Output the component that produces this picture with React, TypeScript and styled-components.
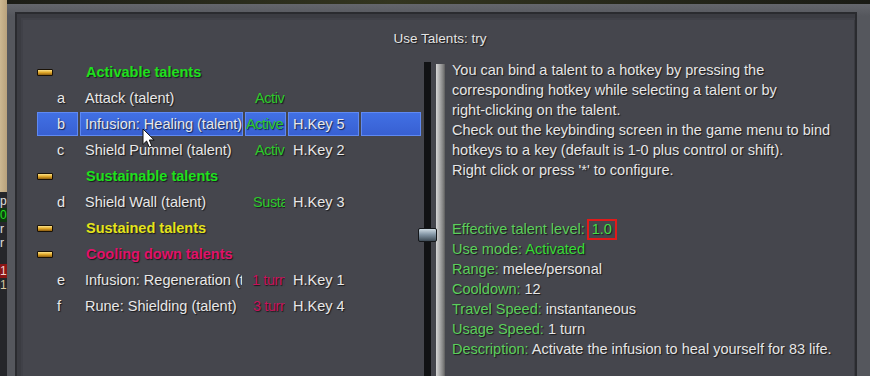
import React from 'react'
import styled, { createGlobalStyle } from 'styled-components'

const GlobalStyle = createGlobalStyle`
  html, body {
    margin: 0;
    padding: 0;
    background: #1e1f19;
  }
  body {
    font-family: "Liberation Sans", Arial, sans-serif;
  }
`

const Screen = styled.div`
  position: relative;
  display: flex;
  width: 870px;
  height: 376px;
  overflow: hidden;
  background: linear-gradient(90deg, #1c1d17, #33351f 45%, #1a1b15);
`

// bit of the game map / log showing at the left edge
const GameEdge = styled.div`
  width: 7px;
  flex: none;
  display: flex;
  flex-direction: column;
  overflow: hidden;
  font-size: 12px;
  line-height: 14px;
`

const Parchment = styled.div`
  height: 192px;
  flex: none;
  background: linear-gradient(90deg, #cdb891, #b9a27c);
`

const LogArea = styled.div`
  flex: 1;
  background: #25262a;
  padding-top: 2px;
`

const LogChar = styled.div<{ $color: string; $bg?: string }>`
  height: 14px;
  color: ${({ $color }) => $color};
  background: ${({ $bg }) => $bg ?? 'transparent'};
`

const Frame = styled.div`
  flex: 1;
  display: flex;
  margin-top: 4px;
  padding: 8px 13px 0 8px;
  background: linear-gradient(180deg, #64666c, #55575d 12px);
`

const Panel = styled.div`
  flex: 1;
  display: flex;
  flex-direction: column;
  border: 2px solid #2a2b2f;
  border-bottom: none;
  background: #45464d;
  box-shadow: inset 4px 4px 0 #3b3c42, inset 6px 6px 0 #404148, inset -1px 0 0 #3a3b41;
  text-shadow: 1px 1px 1px rgba(0, 0, 0, 0.65);
`

const Title = styled.div`
  padding: 15px 0 10px 8px;
  line-height: 20px;
  height: 20px;
  text-align: center;
  font-size: 13.5px;
  color: #e4e4e4;
`

const Body = styled.div`
  flex: 1;
  display: flex;
  padding-left: 20px;
`

const List = styled.div`
  width: 384px;
  flex: none;
  display: flex;
  flex-direction: column;
`

const HeaderRow = styled.div`
  height: 26px;
  display: flex;
  align-items: center;
`

const GoldBar = styled.span`
  width: 14px;
  height: 5px;
  margin-right: 33px;
  border: 1px solid #1a1206;
  border-radius: 1px;
  background: linear-gradient(180deg, #fde38a, #e0a82a 50%, #8d5d10);
`

const HeaderText = styled.span<{ $color: string }>`
  font-size: 14.5px;
  font-weight: bold;
  color: ${({ $color }) => $color};
`

const ItemRow = styled.div`
  height: 26px;
  display: grid;
  grid-template-columns: 41px 163px 41px 71px 60px;
  column-gap: 2px;
  align-items: center;
`

const Cell = styled.div<{ $pad: number; $selected?: boolean; $color?: string; $tight?: boolean }>`
  height: 22px;
  display: flex;
  align-items: center;
  overflow: hidden;
  white-space: nowrap;
  padding-left: ${({ $pad }) => $pad}px;
  font-size: 14.5px;
  letter-spacing: ${({ $tight }) => ($tight ? '-0.4px' : 'normal')};
  color: ${({ $color }) => $color ?? '#e8e8e8'};
  border: 1px solid ${({ $selected }) => ($selected ? '#5f89f2' : 'transparent')};
  background: ${({ $selected }) => ($selected ? 'linear-gradient(180deg, #4170e4, #3860d2)' : 'transparent')};
`

const ScrollRail = styled.div`
  position: relative;
  width: 7px;
  flex: none;
  margin: 3px 0 0 3px;
  background: #111214;
`

const Thumb = styled.div`
  position: absolute;
  left: -6px;
  top: 166px;
  width: 17px;
  height: 12px;
  border: 1px solid #15171a;
  border-radius: 2px;
  background: linear-gradient(180deg, #cfdbe4, #8597a6 45%, #3e4a55);
`

const Separator = styled.div`
  width: 9px;
  flex: none;
  margin: 5px 0 0 5px;
  background: linear-gradient(90deg, #d6d6d6, #adadad 40%, #7f7f7f 80%, #5c5c5c);
`

const Info = styled.div`
  flex: 1;
  margin-left: 7px;
  padding-top: 1px;
  font-size: 14.5px;
  color: #e6e6e6;
`

const Line = styled.div`
  height: 20px;
  line-height: 20px;
  white-space: nowrap;
`

const Gap = styled.div`
  height: 39px;
`

const Label = styled.span`
  color: #5ccf5c;
`

const Value = styled.span`
  color: #36dc36;
`

const LevelBox = styled.span`
  display: inline-block;
  height: 17px;
  line-height: 17px;
  padding: 0 3px;
  margin-left: 2px;
  border: 2px solid #e11a1a;
  color: #45dd45;
  vertical-align: top;
`

const Cursor = styled.svg`
  position: absolute;
  left: 142px;
  top: 128px;
`

type Item = {
  key: string
  name: string
  status: string
  statusColor: string
  hotkey: string
  selected?: boolean
  statusPad?: number
}

type Group = {
  title: string
  color: string
  items: Item[]
}

const GREEN = '#2ccb2c'
const PINK = '#c8135b'

const groups: Group[] = [
  {
    title: 'Activable talents',
    color: '#1ee11e',
    items: [
      { key: 'a', name: 'Attack (talent)', status: 'Activ', statusColor: GREEN, hotkey: '' },
      { key: 'b', name: 'Infusion: Healing (talent)', status: 'Active', statusColor: GREEN, hotkey: 'H.Key 5', selected: true, statusPad: 0 },
      { key: 'c', name: 'Shield Pummel (talent)', status: 'Activ', statusColor: GREEN, hotkey: 'H.Key 2' },
    ],
  },
  {
    title: 'Sustainable talents',
    color: '#1ee11e',
    items: [{ key: 'd', name: 'Shield Wall (talent)', status: 'Susta', statusColor: GREEN, hotkey: 'H.Key 3', statusPad: 7 }],
  },
  { title: 'Sustained talents', color: '#e4e41c', items: [] },
  {
    title: 'Cooling down talents',
    color: '#e0126a',
    items: [
      { key: 'e', name: 'Infusion: Regeneration (talent)', status: '1 turn', statusColor: PINK, hotkey: 'H.Key 1', statusPad: 6 },
      { key: 'f', name: 'Rune: Shielding (talent)', status: '3 turn', statusColor: PINK, hotkey: 'H.Key 4', statusPad: 7 },
    ],
  },
]

const logChars = [
  { c: 'p', color: '#e0e0e0' },
  { c: '0', color: '#20e020', bg: '#0f3a10' },
  { c: 'r', color: '#e0e0e0' },
  { c: 'r', color: '#e0e0e0' },
  { c: '', color: '#e0e0e0' },
  { c: '1', color: '#f0d0d0', bg: '#8a1616' },
  { c: '1', color: '#d8c8a0' },
]

export default function App() {
  return (
    <>
      <GlobalStyle />
      <Screen>
        <GameEdge>
          <Parchment />
          <LogArea>
            {logChars.map((l, i) => (
              <LogChar key={i} $color={l.color} $bg={l.bg}>
                {l.c}
              </LogChar>
            ))}
          </LogArea>
        </GameEdge>
        <Frame>
          <Panel>
            <Title>Use Talents: try</Title>
            <Body>
              <List>
                {groups.map(group => (
                  <React.Fragment key={group.title}>
                    <HeaderRow>
                      <GoldBar />
                      <HeaderText $color={group.color}>{group.title}</HeaderText>
                    </HeaderRow>
                    {group.items.map(item => (
                      <ItemRow key={item.key}>
                        <Cell $pad={19} $selected={item.selected}>
                          {item.key}
                        </Cell>
                        <Cell $pad={4} $selected={item.selected}>
                          {item.name}
                        </Cell>
                        <Cell $pad={item.statusPad ?? 9} $selected={item.selected} $color={item.statusColor} $tight>
                          {item.status}
                        </Cell>
                        <Cell $pad={4} $selected={item.selected}>
                          {item.hotkey}
                        </Cell>
                        <Cell $pad={4} $selected={item.selected} />
                      </ItemRow>
                    ))}
                  </React.Fragment>
                ))}
              </List>
              <ScrollRail>
                <Thumb />
              </ScrollRail>
              <Separator />
              <Info>
                <Line>You can bind a talent to a hotkey by pressing the</Line>
                <Line>corresponding hotkey while selecting a talent or by</Line>
                <Line>right-clicking on the talent.</Line>
                <Line>Check out the keybinding screen in the game menu to bind</Line>
                <Line>hotkeys to a key (default is 1-0 plus control or shift).</Line>
                <Line>Right click or press '*' to configure.</Line>
                <Gap />
                <Line>
                  <Label>Effective talent level:</Label>
                  <LevelBox>1.0</LevelBox>
                </Line>
                <Line>
                  <Label>Use mode: </Label>
                  <Value>Activated</Value>
                </Line>
                <Line>
                  <Label>Range: </Label>melee/personal
                </Line>
                <Line>
                  <Label>Cooldown: </Label>12
                </Line>
                <Line>
                  <Label>Travel Speed: </Label>instantaneous
                </Line>
                <Line>
                  <Label>Usage Speed: </Label>1 turn
                </Line>
                <Line>
                  <Label>Description: </Label>Activate the infusion to heal yourself for 83 life.
                </Line>
              </Info>
            </Body>
          </Panel>
        </Frame>
        <Cursor width="14" height="21" viewBox="0 0 14 21">
          <path d="M1 1 L1 16.5 L4.6 13 L7.2 19 L9.8 17.9 L7.3 12 L12.2 12 Z" fill="#ffffff" stroke="#111" strokeWidth="1" />
        </Cursor>
      </Screen>
    </>
  )
}
